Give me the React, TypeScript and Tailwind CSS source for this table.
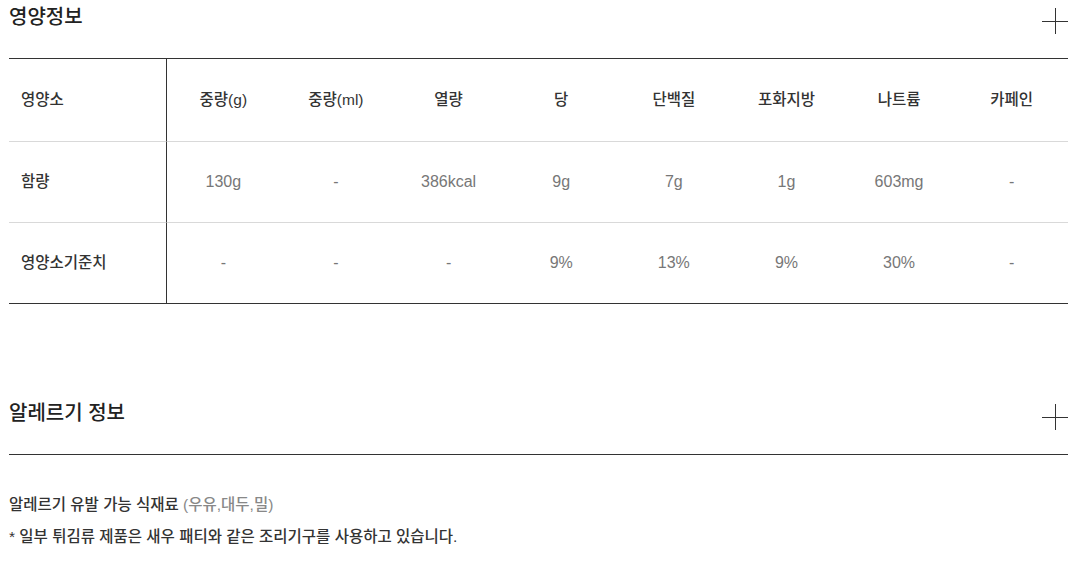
const cols = ["중량(g)", "중량(ml)", "열량", "당", "단백질", "포화지방", "나트륨", "카페인"];
const rows = [
  { label: "함량", values: ["130g", "-", "386kcal", "9g", "7g", "1g", "603mg", "-"] },
  { label: "영양소기준치", values: ["-", "-", "-", "9%", "13%", "9%", "30%", "-"] },
];

function SectionHead({ title }: { title: string }) {
  return (
    <div className="flex h-[59px] items-start justify-between border-b border-[#333]">
      <h2 className="pt-[3px] text-[20px] font-medium leading-[28px] text-[#222]">{title}</h2>
      <div className="relative mt-[8px] h-[26px] w-[26px]">
        <span className="absolute left-0 top-[12.5px] h-px w-[26px] bg-[#333]" />
        <span className="absolute left-[12.5px] top-0 h-[26px] w-px bg-[#333]" />
      </div>
    </div>
  );
}

export default function App() {
  return (
    <div className="min-h-[588px] bg-white" style={{ fontFamily: '"Liberation Sans", "Noto Sans CJK KR", sans-serif' }}>
      <div className="ml-[9px] w-[1059px]">
        <SectionHead title="영양정보" />
        <div className="grid grid-cols-[158px_repeat(8,1fr)] border-b border-[#333] text-[15.5px]">
          <div className="flex h-[82px] items-center border-r border-[#333] pl-[12px] font-medium text-[#333]">영양소</div>
          {cols.map((c) => (
            <div key={c} className="flex h-[82px] items-center justify-center font-medium text-[#333]">{c}</div>
          ))}
          {rows.map((r) => (
            <>
              <div key={r.label} className="flex h-[81px] items-center border-r border-t border-r-[#333] border-t-[#d9d9d9] pl-[12px] font-medium text-[#333]">{r.label}</div>
              {r.values.map((v, i) => (
                <div key={r.label + i} className="flex h-[81px] items-center justify-center border-t border-[#d9d9d9] text-[16px] text-[#777]">{v}</div>
              ))}
            </>
          ))}
        </div>
        <div className="mt-[92px]">
          <SectionHead title="알레르기 정보" />
        </div>
        <div className="pt-[34px] text-[15.5px] font-medium text-[#333]">
          <p className="leading-[32px]">알레르기 유발 가능 식재료 <span className="text-[#888]">(우유,대두,밀)</span></p>
          <p className="leading-[32px]">* 일부 튀김류 제품은 새우 패티와 같은 조리기구를 사용하고 있습니다.</p>
        </div>
      </div>
    </div>
  );
}
